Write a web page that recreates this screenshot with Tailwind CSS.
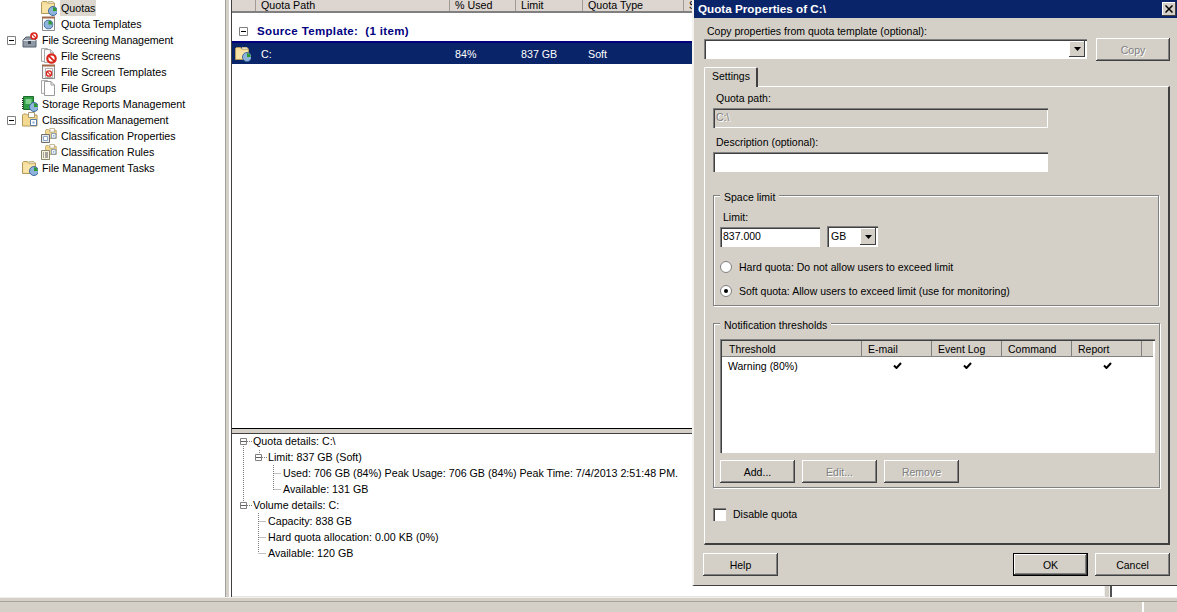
<!DOCTYPE html>
<html lang="en">
<head>
<meta charset="UTF-8">
<title>Quota Properties of C:\</title>
<script src="https://cdn.jsdelivr.net/npm/@tailwindcss/browser@4"></script>
</head>
<body class="w-[1177px] h-[612px] overflow-hidden bg-[#d4d0c8] text-black text-[10.7px] leading-4 font-['Liberation_Sans',sans-serif]">

<!-- shared icons -->
<svg class="hidden">
  <symbol id="clock" viewBox="0 0 10 10"><circle cx="5" cy="5" r="4.5" fill="#8fb4dc" stroke="#3f6a9c"/><path d="M5 5V1.2A3.8 3.8 0 0 1 8.8 5z" fill="#2f9a2f"/></symbol>
  <symbol id="noentry" viewBox="0 0 10 10"><circle cx="5" cy="5" r="3.8" fill="#fff" stroke="#d8261c" stroke-width="2"/><path d="M2.4 2.4l5.2 5.2" stroke="#d8261c" stroke-width="1.6"/></symbol>
  <symbol id="folder" viewBox="0 0 16 16"><path d="M.5 13.5V2.5l1-1h4l1 1.5h7v10.5z" fill="#f4dc98" stroke="#b39a5c"/><path d="M7 1.5h5l1 1.5H7z" fill="#fff" stroke="#c9b98a"/><path d="M1.500 4.500h11v8h-11z" fill="#f8e4a8"/></symbol>
  <symbol id="folderclock" viewBox="0 0 16 16"><use href="#folder" width="16" height="16"/><use href="#clock" x="7" y="6" width="10" height="10"/></symbol>
  <symbol id="page" viewBox="0 0 11 15"><path d="M.5.5h6.500l3.500 3.500v10.500H.5z" fill="#fff" stroke="#9a9a9a"/><path d="M7 .5v3.500h3.500" fill="none" stroke="#9a9a9a"/></symbol>
  <symbol id="folderbox" viewBox="0 0 16 16"><path d="M.5 14V3l1-1h3l1 1h9.500v11z" fill="#f3d98f" stroke="#b39a5c"/><path d="M6.500 .5h6v5h-6z" fill="#fff" stroke="#a89a70"/><path d="M8.500 7.500h6v6h-6z" fill="#fff" stroke="#5a7ca8"/><path d="M10.500 9.500h2v2h-2z" fill="#7ea6d6"/></symbol>
  <symbol id="expander" viewBox="0 0 9 9"><path d="M.5.5h8v8h-8z" fill="#fff" stroke="#808080"/><path d="M2 4.500h5" stroke="#000"/></symbol>
  <symbol id="smallexp" viewBox="0 0 7 7"><path d="M.5.500h6v6h-6z" fill="#fff" stroke="#808080"/><path d="M1 3.500h5" stroke="#606060"/></symbol>
  <symbol id="check" viewBox="0 0 9 7"><path d="M1 3.500l2.500 2.500L8 1" fill="none" stroke="#000" stroke-width="2"/></symbol>
  <symbol id="arrow" viewBox="0 0 7 4"><path d="M0 0h7L3.500 4z" fill="#000"/></symbol>
</svg>

<div class="flex h-[597px]">

  <!-- left tree -->
  <div class="w-[225px] h-full shrink-0 bg-white">
    <div class="flex items-center h-4 pl-[41px]">
      <svg class="w-4 h-4 shrink-0"><use href="#folderclock"/></svg>
      <span class="ml-[3px] px-px bg-[#dcd8d0]">Quotas</span>
    </div>
    <div class="flex items-center h-4 pl-[41px]">
      <svg class="w-4 h-4 shrink-0" viewBox="0 0 16 16"><path d="M1.500 1.500h12v13h-12z" fill="#fff" stroke="#8a8a8a"/><path d="M1 .5h13v2H1z" fill="#a0694a"/><use href="#clock" x="2.500" y="3.500" width="10" height="10"/></svg>
      <span class="ml-1">Quota Templates</span>
    </div>
    <div class="flex items-center h-4 pl-[7px]">
      <svg class="w-[9px] h-[9px] shrink-0"><use href="#expander"/></svg>
      <svg class="w-4 h-4 ml-[6px] shrink-0" viewBox="0 0 16 16"><path d="M1 8l3-3h7l3 3v7H1z" fill="#8f9aa6" stroke="#55606c"/><path d="M1.500 8.500h12" stroke="#dfe4ea"/><path d="M6 9h3v3H6z" fill="#3a4550"/><use href="#noentry" x="8" y="0" width="8" height="8"/></svg>
      <span class="ml-1 tracking-[-0.1px]">File Screening Management</span>
    </div>
    <div class="flex items-center h-4 pl-[41px]">
      <svg class="w-4 h-4 shrink-0" viewBox="0 0 16 16"><use href="#page" x="0" y="0" width="10" height="14"/><use href="#page" x="3" y="1" width="10" height="14"/><use href="#noentry" x="5" y="5" width="11" height="11"/></svg>
      <span class="ml-1">File Screens</span>
    </div>
    <div class="flex items-center h-4 pl-[41px]">
      <svg class="w-4 h-4 shrink-0" viewBox="0 0 16 16"><path d="M1.500 1.500h12v13h-12z" fill="#f4f4f4" stroke="#8a8a8a"/><path d="M1 .5h13v2H1z" fill="#a0694a"/><path d="M4.500 4.500h7v9h-7z" fill="#fff" stroke="#b0b0b0"/><use href="#noentry" x="4.500" y="6" width="7" height="7"/></svg>
      <span class="ml-1">File Screen Templates</span>
    </div>
    <div class="flex items-center h-4 pl-[41px]">
      <svg class="w-4 h-4 shrink-0" viewBox="0 0 16 16"><use href="#page" x="0" y="0" width="10" height="14"/><use href="#page" x="3" y="1" width="11" height="15"/></svg>
      <span class="ml-1">File Groups</span>
    </div>
    <div class="flex items-center h-4 pl-[22px]">
      <svg class="w-4 h-4 shrink-0" viewBox="0 0 16 16"><path d="M1.500 .5h10v13h-10z" fill="#2f9e44" stroke="#1c6a2c"/><path d="M3.500 3h6v5h-6z" fill="#7fd08a"/><path d="M.5 2v11" stroke="#222" stroke-dasharray="1 1"/><use href="#clock" x="7" y="6" width="10" height="10"/></svg>
      <span class="ml-1">Storage Reports Management</span>
    </div>
    <div class="flex items-center h-4 pl-[7px]">
      <svg class="w-[9px] h-[9px] shrink-0"><use href="#expander"/></svg>
      <svg class="w-4 h-4 ml-[6px] shrink-0"><use href="#folderbox"/></svg>
      <span class="ml-1 tracking-[-0.08px]">Classification Management</span>
    </div>
    <div class="flex items-center h-4 pl-[41px]">
      <svg class="w-4 h-4 shrink-0" viewBox="0 0 16 16"><use href="#folderbox" x="4" y="0" width="12" height="12"/><path d="M.5 6.500h8v8h-8z" fill="#e8e8e8" stroke="#707070"/><path d="M2.500 8.500h4v4h-4z" fill="#fff" stroke="#8aa8cc"/></svg>
      <span class="ml-1">Classification Properties</span>
    </div>
    <div class="flex items-center h-4 pl-[41px]">
      <svg class="w-4 h-4 shrink-0" viewBox="0 0 16 16"><use href="#folderbox" x="4" y="0" width="12" height="12"/><path d="M.5 6.500h8v9h-8z" fill="#f6f2e0" stroke="#8a8a70"/><path d="M2 9h1M4 9h3M2 11h1M4 11h3M2 13h1M4 13h3" stroke="#555"/></svg>
      <span class="ml-1">Classification Rules</span>
    </div>
    <div class="flex items-center h-4 pl-[22px]">
      <svg class="w-4 h-4 shrink-0"><use href="#folderclock"/></svg>
      <span class="ml-1">File Management Tasks</span>
    </div>
  </div>

  <!-- splitter -->
  <div class="w-[6px] h-full shrink-0 bg-[#d4d0c8] border-l border-[#a0a0a0] border-r-2 border-r-white"></div>

  <!-- center column -->
  <div class="w-[873px] h-full shrink-0 flex flex-col border-l border-[#404040]">
    <div class="h-[429px] shrink-0 bg-white border-b border-b-black flex flex-col">
      <div class="h-[13px] shrink-0 bg-[#dcd5d0] border-b-2 border-[#808080] flex">
        <div class="w-[24px] border-r border-[#a09c94]"></div>
        <div class="w-[194px] pl-[5px] border-r border-[#a09c94] leading-[11px] overflow-hidden">Quota Path</div>
        <div class="w-[66px] pl-[5px] border-r border-[#a09c94] leading-[11px] overflow-hidden">% Used</div>
        <div class="w-[67px] pl-[5px] border-r border-[#a09c94] leading-[11px] overflow-hidden">Limit</div>
        <div class="w-[101px] pl-[5px] border-r border-[#a09c94] leading-[11px] overflow-hidden">Quota Type</div>
        <div class="w-[8px] pl-[5px] leading-[11px] overflow-hidden">S</div>
      </div>
      <div class="flex items-center h-[28px] shrink-0 pl-[7px] pt-[8px]">
        <svg class="w-[9px] h-[9px] shrink-0"><use href="#expander"/></svg>
        <span class="ml-[9px] text-[11.5px] tracking-[0.35px] font-bold text-[#000080]">Source Template:&nbsp; (1 item)</span>
      </div>
      <div class="flex items-center h-[23px] shrink-0 bg-[#0a246a] border-t-2 border-[#00007f] text-white">
        <svg class="w-4 h-4 ml-[3px] shrink-0"><use href="#folderclock"/></svg>
        <span class="w-[204px] pl-[10px]">C:</span>
        <span class="w-[66px]">84%</span>
        <span class="w-[67px]">837 GB</span>
        <span>Soft</span>
      </div>
    </div>
    <div class="h-[4px] shrink-0 bg-[#d4d0c8]"></div>
    <!-- detail pane -->
    <div class="relative flex-1 bg-white border-t border-[#404040] overflow-hidden">
      <svg class="absolute left-0 top-0 w-[60px] h-[130px]" fill="none" stroke="#808080" stroke-dasharray="1 1">
        <path d="M11.500 12v58M15 7.500h5M27.500 16v5M30 23.500h5M41.500 31v25M41.500 39.500h8M41.500 55.500h8M15 71.500h5M26.500 79v40M26.500 87.500h8M26.500 103.500h8M26.500 119.500h8"/>
      </svg>
      <div class="relative -mt-px">
        <div class="flex h-4 items-center pl-[8px]"><svg class="w-[7px] h-[7px] mr-[6px] shrink-0"><use href="#smallexp"/></svg>Quota details: C:\</div>
        <div class="flex h-4 items-center pl-[23px]"><svg class="w-[7px] h-[7px] mr-[6px] shrink-0"><use href="#smallexp"/></svg>Limit: 837 GB (Soft)</div>
        <div class="h-4 pl-[51px] whitespace-nowrap">Used: 706 GB (84%) Peak Usage: 706 GB (84%) Peak Time: 7/4/2013 2:51:48 PM.</div>
        <div class="h-4 pl-[51px]">Available: 131 GB</div>
        <div class="flex h-4 items-center pl-[8px]"><svg class="w-[7px] h-[7px] mr-[6px] shrink-0"><use href="#smallexp"/></svg>Volume details: C:</div>
        <div class="h-4 pl-[36px]">Capacity: 838 GB</div>
        <div class="h-4 pl-[36px]">Hard quota allocation: 0.00 KB (0%)</div>
        <div class="h-4 pl-[36px]">Available: 120 GB</div>
      </div>
      <div class="absolute left-0 right-0 bottom-0 h-px bg-[#e8e6e0]"></div>
    </div>
  </div>

  <!-- right splitter and pane -->
  <div class="w-[6px] h-full shrink-0 bg-[#d4d0c8] border-l border-[#f0f0f0] border-r border-r-[#f0f0f0]"></div>
  <div class="flex-1 h-full bg-white border-l-2 border-[#505050]"></div>
</div>

<!-- status bar -->
<div class="h-[4px] bg-[#d4d0c8] border-t border-[#f0eeea]"></div>
<div class="h-[11px] bg-[#d4d0c8] border-t border-[#a8a49c] flex justify-end">
  <div class="w-[35px] border-l-2 border-l-white"></div>
</div>

<!-- dialog window -->
<div class="absolute left-[692px] top-0 w-[485px] h-[586px] bg-[#d4d0c8] border-l-2 border-l-[#f4f2ee] border-b border-b-[#404040] flex flex-col text-[10.5px]">
  <div class="h-[18px] shrink-0 bg-[#0a246a] text-white text-[11.7px] font-bold pl-[4px] leading-[18px] flex justify-between">
    <span>Quota Properties of C:\</span>
    <div class="w-[14px] h-[14px] mt-[2px] mr-px bg-[#d4d0c8] text-black flex items-center justify-center shadow-[inset_-1px_-1px_#404040,inset_1px_1px_#fff]">
      <svg class="w-2 h-2" viewBox="0 0 8 8"><path d="M.5.5l7 7M7.500.5l-7 7" stroke="#000" stroke-width="1.500"/></svg>
    </div>
  </div>

  <div class="pl-[10px] pt-[5px]">
    <div class="pl-[3px] h-4">Copy properties from quota template (optional):</div>
    <div class="flex">
      <div class="w-[383px] h-[20px] shrink-0 bg-white shadow-[inset_1px_1px_#808080,inset_2px_2px_#404040,inset_-1px_-1px_#fff] flex justify-end p-[2px]">
        <div class="w-[16px] h-[16px] bg-[#d4d0c8] flex items-center justify-center shadow-[inset_-1px_-1px_#404040,inset_1px_1px_#fff]"><svg class="w-[7px] h-[4px]"><use href="#arrow"/></svg></div>
      </div>
      <div class="ml-[9px] -mt-px w-[74px] h-[23px] shrink-0 flex items-center justify-center text-[#808080] [text-shadow:1px_1px_#fff] shadow-[inset_-1px_-1px_#404040,inset_1px_1px_#fff,inset_-2px_-2px_#808080]">Copy</div>
    </div>

    <!-- tab -->
    <div class="mt-[6px] w-[54px] h-[20px] pl-[7px] relative z-10 bg-[#d4d0c8] border-t border-l border-white border-r-2 border-r-[#404040] rounded-t-[2px]">Settings</div>
    <div class="h-[459px] w-[466px] -mt-px border-t border-l border-white border-r-2 border-b-2 border-r-[#404040] border-b-[#404040] pl-[8px] pt-[3px]">
      <div class="pl-[3px] h-4">Quota path:</div>
      <div class="mt-[2px] w-[335px] h-[20px] pl-[3px] leading-[18px] text-[#808080] [text-shadow:1px_1px_#fff] shadow-[inset_1px_1px_#808080,inset_2px_2px_#404040,inset_-1px_-1px_#fff]">C:\</div>
      <div class="pl-[3px] h-4 mt-[6px]">Description (optional):</div>
      <div class="mt-[2px] w-[335px] h-[20px] bg-white shadow-[inset_1px_1px_#808080,inset_2px_2px_#404040,inset_-1px_-1px_#fff]"></div>

      <!-- space limit -->
      <div class="mt-[23px] w-[446px] h-[111px] border border-[#808080] shadow-[1px_1px_#fff,inset_1px_1px_#fff] px-[6px]">
        <div class="w-fit -mt-[7px] px-[4px] bg-[#d4d0c8]">Space limit</div>
        <div class="h-4 mt-[4px] pl-[3px]">Limit:</div>
        <div class="flex">
          <div class="w-[100px] h-[20px] mt-[2px] bg-white pl-[3px] leading-[18px] shadow-[inset_1px_1px_#808080,inset_2px_2px_#404040,inset_-1px_-1px_#fff]">837.000</div>
          <div class="w-[51px] h-[21px] ml-[7px] mt-[1px] bg-white pl-[4px] leading-[17px] flex justify-between shadow-[inset_1px_1px_#808080,inset_2px_2px_#404040,inset_-1px_-1px_#fff] p-[2px]">GB
            <div class="w-[16px] h-[17px] bg-[#d4d0c8] flex items-center justify-center shadow-[inset_-1px_-1px_#404040,inset_1px_1px_#fff]"><svg class="w-[7px] h-[4px]"><use href="#arrow"/></svg></div>
          </div>
        </div>
        <div class="flex items-center h-4 mt-[12px]">
          <span class="w-[12px] h-[12px] rounded-full bg-white border border-[#808080] shrink-0"></span>
          <span class="ml-[7px]">Hard quota: Do not allow users to exceed limit</span>
        </div>
        <div class="flex items-center h-4 mt-[8px]">
          <span class="w-[12px] h-[12px] rounded-full bg-white border border-[#808080] shrink-0 flex items-center justify-center"><span class="w-1 h-1 rounded-full bg-black"></span></span>
          <span class="ml-[7px]">Soft quota: Allow users to exceed limit (use for monitoring)</span>
        </div>
      </div>

      <!-- thresholds -->
      <div class="mt-[17px] w-[447px] h-[165px] border border-[#808080] shadow-[1px_1px_#fff,inset_1px_1px_#fff] px-[6px]">
        <div class="w-fit -mt-[7px] px-[4px] bg-[#d4d0c8]">Notification thresholds</div>
        <div class="w-[435px] h-[114px] mt-[6px] bg-white shadow-[inset_1px_1px_#808080,inset_2px_2px_#404040,inset_-1px_-1px_#fff] p-[2px]">
          <div class="flex h-[16px] bg-[#d4d0c8] shadow-[inset_0_-1px_#808080] leading-[17px]">
            <div class="w-[140px] pl-[7px] border-r border-[#808080]">Threshold</div>
            <div class="w-[70px] pl-[6px] border-r border-[#808080]">E-mail</div>
            <div class="w-[70px] pl-[6px] border-r border-[#808080]">Event Log</div>
            <div class="w-[70px] pl-[6px] border-r border-[#808080]">Command</div>
            <div class="w-[70px] pl-[6px] border-r border-[#808080]">Report</div>
          </div>
          <div class="flex h-[17px] items-center">
            <div class="w-[140px] pl-[6px]">Warning (80%)</div>
            <div class="w-[70px] flex justify-center"><svg class="w-[9px] h-[7px]"><use href="#check"/></svg></div>
            <div class="w-[70px] flex justify-center"><svg class="w-[9px] h-[7px]"><use href="#check"/></svg></div>
            <div class="w-[70px]"></div>
            <div class="w-[70px] flex justify-center"><svg class="w-[9px] h-[7px]"><use href="#check"/></svg></div>
          </div>
        </div>
        <div class="flex gap-[7px] mt-[7px]">
          <div class="w-[75px] h-[23px] flex items-center justify-center shadow-[inset_-1px_-1px_#404040,inset_1px_1px_#fff,inset_-2px_-2px_#808080]">Add...</div>
          <div class="w-[75px] h-[23px] flex items-center justify-center text-[#808080] [text-shadow:1px_1px_#fff] shadow-[inset_-1px_-1px_#404040,inset_1px_1px_#fff,inset_-2px_-2px_#808080]">Edit...</div>
          <div class="w-[75px] h-[23px] flex items-center justify-center text-[#808080] [text-shadow:1px_1px_#fff] shadow-[inset_-1px_-1px_#404040,inset_1px_1px_#fff,inset_-2px_-2px_#808080]">Remove</div>
        </div>
      </div>

      <div class="flex items-center h-[14px] mt-[19px]">
        <span class="w-[13px] h-[13px] bg-white shrink-0 shadow-[inset_1px_1px_#808080,inset_2px_2px_#404040,inset_-1px_-1px_#fff]"></span>
        <span class="ml-[7px]">Disable quota</span>
      </div>
    </div>

    <!-- dialog buttons -->
    <div class="flex mt-[8px] -ml-px w-[467px]">
      <div class="w-[75px] h-[23px] flex items-center justify-center shadow-[inset_-1px_-1px_#404040,inset_1px_1px_#fff,inset_-2px_-2px_#808080]">Help</div>
      <div class="w-[75px] h-[23px] ml-auto flex items-center justify-center border border-black shadow-[inset_-1px_-1px_#404040,inset_1px_1px_#fff,inset_-2px_-2px_#808080]">OK</div>
      <div class="w-[75px] h-[23px] ml-[7px] flex items-center justify-center shadow-[inset_-1px_-1px_#404040,inset_1px_1px_#fff,inset_-2px_-2px_#808080]">Cancel</div>
    </div>
  </div>
</div>

</body>
</html>
